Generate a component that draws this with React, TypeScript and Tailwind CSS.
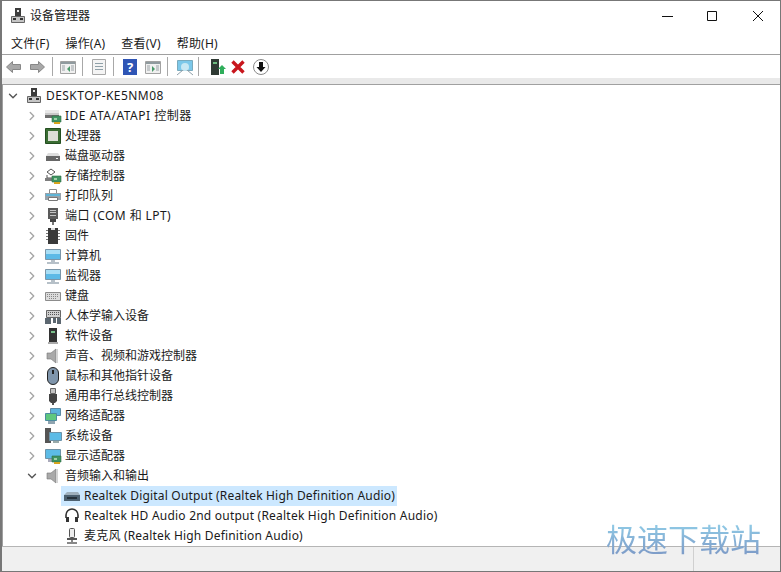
import { ChevronDown, ChevronRight } from 'lucide-react'
import type { ReactNode } from 'react'

const font = '[font-family:"Noto_Sans","Noto_Sans_CJK_SC",sans-serif]'

const Svg = ({ children, w = 18, h = 18 }: { children: ReactNode; w?: number; h?: number }) => (
	<svg width={w} height={h} viewBox={`0 0 ${w} ${h}`} className="shrink-0">
		{children}
	</svg>
)

const Computer = () => (
	<Svg>
		<path d="M6 1h6v8H6z" fill="#3c3c3c" />
		<path d="M8 3h2v2H8z" fill="#e8e8e8" />
		<path d="M2.500 9.500h13v6h-13z" fill="#c4c4c4" stroke="#666" />
		<path d="M4 11h3v2H4zM11 11h3v2h-3z" fill="#333" />
	</Svg>
)
const Board = () => (
	<>
		<path d="M8 9h9v6H8z" fill="#3f9463" stroke="#2b6b41" strokeWidth=".6" />
		<path d="M10 11h3v2h-3z" fill="#9fd0a8" />
		<path d="M10 15h6v2h-6z" fill="#d6a51f" />
	</>
)
const Ide = () => (
	<Svg>
		<path d="M1 5a2 2 0 0 1 2-2h10a2 2 0 0 1 2 2v6H1z" fill="#c9c9c9" />
		<path d="M1 3h14v3H1z" fill="#e8e8e8" />
		<path d="M1 8h14v3H1z" fill="#6e6e6e" />
		<Board />
	</Svg>
)
const Cpu = () => (
	<Svg>
		<path d="M1.500 1.500h15v15h-15z" fill="#3a6d33" stroke="#234f20" />
		<path d="M4 4h10v10H4z" fill="#dcdfd6" />
	</Svg>
)
const Disk = () => (
	<Svg>
		<path d="M2 9l2-3h10l2 3z" fill="#dedede" />
		<path d="M2 9h14v5H2z" fill="#676767" />
		<path d="M12 11h2v1h-2z" fill="#eee" />
	</Svg>
)
const Storage = () => (
	<Svg>
		<path d="M3 5l4-3 4 3-4 3z" fill="#fff" stroke="#555" />
		<path d="M3 8v3h5" fill="none" stroke="#555" />
		<path d="M1 11h7v3H1z" fill="#7d7d7d" />
		<Board />
	</Svg>
)
const Printer = () => (
	<Svg>
		<path d="M5.500 2.500h7v4h-7z" fill="#fff" stroke="#8a8a8a" />
		<path d="M1 6h16v7H1z" fill="#98a2aa" />
		<path d="M2 7h14v2H2z" fill="#5fb4d6" />
		<path d="M4.500 10.500h9v3h-9z" fill="#fff" stroke="#777" />
	</Svg>
)
const Port = () => (
	<Svg>
		<path d="M4 1h10v11H4z" fill="#5a5a5a" />
		<path d="M6 3h6v1H6zM6 5h6v1H6zM6 8h6v1H6z" fill="#c4c4c4" />
		<path d="M6 12h6v3H6z" fill="#444" />
		<path d="M8 15h2v3H8z" fill="#777" />
	</Svg>
)
const Chip = () => (
	<Svg>
		<path d="M4 1h10v16H4z" fill="#3a3a3a" />
		<path d="M2 3h2v1H2zM2 6h2v1H2zM2 9h2v1H2zM2 12h2v1H2zM14 3h2v1h-2zM14 6h2v1h-2zM14 9h2v1h-2zM14 12h2v1h-2z" fill="#777" />
		<path d="M7 1h4v2H7z" fill="#ddd" />
	</Svg>
)
const Monitor = () => (
	<Svg>
		<path d="M1.500 2.500h15v10h-15z" fill="#5cb9e6" stroke="#7a95a8" />
		<path d="M2 3h14v4H2z" fill="#a9def5" />
		<path d="M7 13h4v2H7zM3 15h12v2H3z" fill="#b6c0c8" />
	</Svg>
)
const Keyboard = () => (
	<Svg>
		<path d="M1.500 5.500h15v8h-15z" fill="#dcdcdc" stroke="#8c8c8c" />
		<path d="M3 7.500h12M3 9.500h12M5 11.500h8" stroke="#888" strokeDasharray="1 1" />
	</Svg>
)
const Hid = () => (
	<Svg>
		<path d="M2.500 3.500h14v7h-14z" fill="#d0d0d0" stroke="#666" />
		<path d="M4 5.500h11M4 7.500h11" stroke="#555" strokeDasharray="1 1" />
		<path d="M1 11h6v6H1zM9 11h3v5H9zM13 11h4v6h-4z" fill="#5c6770" />
	</Svg>
)
const SoftDevice = () => (
	<Svg>
		<path d="M5 1h8v14H5z" fill="#333" />
		<path d="M7 4h4v2H7z" fill="#79c08a" />
		<path d="M4 15h10v2H4z" fill="#aaa" />
	</Svg>
)
const Speaker = () => (
	<Svg>
		<path d="M3 6h4l5-4v14l-5-4H3z" fill="#a9a9a9" stroke="#777" strokeWidth=".6" />
		<path d="M12 2h2v14h-2z" fill="#d4d4d4" />
	</Svg>
)
const Mouse = () => (
	<Svg>
		<rect x="3.500" y="0.500" width="11" height="17" rx="5.500" fill="#7f95ab" stroke="#222" />
		<path d="M9 3v4" stroke="#222" strokeWidth="2" />
	</Svg>
)
const Usb = () => (
	<Svg>
		<path d="M6.500 1.500h5v5h-5z" fill="#c4c4c4" stroke="#666" />
		<path d="M5 7h8v7l-2 2H7l-2-2z" fill="#444" />
		<path d="M8 16h2v2H8z" fill="#555" />
	</Svg>
)
const Network = () => (
	<Svg>
		<path d="M6.500 1.500h10v7h-10z" fill="#5cb3dc" stroke="#5c8ba5" />
		<path d="M1.500 6.500h11v7h-11z" fill="#5fc77e" stroke="#4b8ba0" />
		<path d="M4 14h7v3H4z" fill="#8fa4b0" />
	</Svg>
)
const SystemDevice = () => (
	<Svg>
		<path d="M1 1h6v15H1z" fill="#555" />
		<path d="M5.500 5.500h12v8h-12z" fill="#5cbbe6" stroke="#6d93a8" />
		<path d="M9 14h6v2H9z" fill="#9aa" />
	</Svg>
)
const Display = () => (
	<Svg>
		<path d="M1.500 2.500h15v9h-15z" fill="#5cbbe6" stroke="#6d93a8" />
		<path d="M4 12h6v3H4z" fill="#aab" />
		<Board />
	</Svg>
)
const AudioCard = () => (
	<Svg>
		<path d="M1 8l3-3h11l2 3z" fill="#9fb0bd" />
		<path d="M1 8h16v6H1z" fill="#4d6171" />
		<path d="M4 10h10v2H4z" fill="#26323c" />
	</Svg>
)
const Headphones = () => (
	<Svg>
		<path d="M3 11V8a6 6 0 0 1 12 0v3" fill="none" stroke="#333" strokeWidth="1.600" />
		<path d="M3 10h3v5H3zM12 10h3v5h-3z" fill="#333" />
	</Svg>
)
const Mic = () => (
	<Svg>
		<rect x="6.500" y="1.500" width="5" height="9" rx="1" fill="#ededed" stroke="#555" />
		<path d="M4 11h10v2H4z" fill="#555" />
		<path d="M8 13h2v2H8zM4 15h10v2H4z" fill="#888" />
	</Svg>
)

const categories: [string, () => ReactNode, string?][] = [
	['IDE ATA/ATAPI 控制器', Ide, 'tracking-[0.5px]'],
	['处理器', Cpu],
	['磁盘驱动器', Disk],
	['存储控制器', Storage],
	['打印队列', Printer],
	['端口 (COM 和 LPT)', Port, 'tracking-[0.4px]'],
	['固件', Chip],
	['计算机', Monitor],
	['监视器', Monitor],
	['键盘', Keyboard],
	['人体学输入设备', Hid],
	['软件设备', SoftDevice],
	['声音、视频和游戏控制器', Speaker],
	['鼠标和其他指针设备', Mouse],
	['通用串行总线控制器', Usb],
	['网络适配器', Network],
	['系统设备', SystemDevice],
	['显示适配器', Display],
]

const audioChildren: [string, () => ReactNode, boolean, string][] = [
	['Realtek Digital Output (Realtek High Definition Audio)', AudioCard, true, 'tracking-[0.19px]'],
	['Realtek HD Audio 2nd output (Realtek High Definition Audio)', Headphones, false, 'tracking-[0.22px]'],
	['麦克风 (Realtek High Definition Audio)', Mic, false, 'tracking-[0.19px]'],
]

const Chevron = ({ open }: { open?: boolean }) => (
	<span className="flex w-[19px] shrink-0 items-center">
		{open ? (
			<ChevronDown size={14} strokeWidth={2.4} className="text-[#555]" />
		) : (
			<ChevronRight size={14} strokeWidth={2.4} className="text-[#a6a6a6]" />
		)}
	</span>
)

const Category = ({
	label,
	Icon,
	open,
	spacing = '',
}: {
	label: string
	Icon: () => ReactNode
	open?: boolean
	spacing?: string
}) => (
	<div className="flex h-5 items-center pl-[21px]">
		<Chevron open={open} />
		<Icon />
		<span className={`ml-[3px] whitespace-nowrap ${spacing}`}>{label}</span>
	</div>
)

const Divider = ({ className }: { className: string }) => <span className={`h-[19px] w-px bg-[#a8a8a8] ${className}`} />

const PanelIcon = ({ arrow }: { arrow: string }) => (
	<Svg>
		<path d="M1.500 3.500h15v12h-15z" fill="#f0f0f0" stroke="#a2a2a2" />
		<path d="M2 4h14v2H2z" fill="#8f9a9e" />
		<path d="M3 8h3M3 10h3M3 12h3M12 8h3M12 10h3M12 12h3" stroke="#9aa2a6" />
		<path d={arrow} fill="#4a9a6a" />
	</Svg>
)

const Toolbar = () => (
	<div className="flex h-[23px] shrink-0 items-center pl-[3px]">
		<Svg>
			<path d="M1.500 9l6-5.500v3h8v5h-8v3z" fill="#a8a8a8" stroke="#888" />
		</Svg>
		<span className="w-[5px]" />
		<Svg>
			<path d="M16.500 9l-6-5.500v3h-8v5h8v3z" fill="#a8a8a8" stroke="#888" />
		</Svg>
		<Divider className="ml-[6px] mr-[6px]" />
		<PanelIcon arrow="M11 8l-3 3 3 3z" />
		<Divider className="ml-[5px] mr-[7px]" />
		<Svg>
			<path d="M2.500 1.500h13v15h-13z" fill="#f4f4f4" stroke="#a8a8a8" />
			<path d="M5 5.500h8M5 8.500h8M5 11.500h8" stroke="#8fa0a8" />
		</Svg>
		<Divider className="ml-[5px] mr-[7px]" />
		<Svg>
			<path d="M2 1h14v16H2z" fill="#2f55b5" />
			<text x="9" y="14" textAnchor="middle" fontSize="13" fontWeight="700" fill="#fff">
				?
			</text>
		</Svg>
		<span className="w-[5px]" />
		<PanelIcon arrow="M8 8l3 3-3 3z" />
		<Divider className="ml-[5px] mr-[8px]" />
		<Svg>
			<path d="M1.500 2.500h15v10h-15z" fill="#7cc8ea" stroke="#79aabd" />
			<circle cx="9" cy="9" r="4" fill="#c8e8f4" />
			<path d="M1 17l6-5M11 12l6 5" fill="none" stroke="#8fa0aa" />
		</Svg>
		<Divider className="ml-[4px] mr-[9px]" />
		<Svg>
			<path d="M3 1h8v16H3z" fill="#2f3a34" />
			<path d="M5 4h4v2H5z" fill="#6dbb80" />
			<path d="M10 11l4-4 4 4h-2v5h-4v-5z" fill="#2fae5b" />
		</Svg>
		<span className="w-[3px]" />
		<Svg>
			<path d="M3.500 3.500l11 11M14.500 3.500l-11 11" stroke="#c8161d" strokeWidth="3.400" />
		</Svg>
		<span className="w-[5px]" />
		<Svg>
			<circle cx="9" cy="9" r="7.500" fill="#fff" stroke="#8a8a8a" />
			<path d="M7 4h4v5h2.500L9 14 4.500 9H7z" fill="#111" />
		</Svg>
	</div>
)

export default function App() {
	return (
		<div
			className={`relative flex h-[572px] w-[781px] flex-col overflow-hidden border-t border-l-2 border-r border-b border-[#777] bg-white text-[12px] text-[#1a1a1a] ${font}`}
		>
			<div className="flex h-[29px] shrink-0 items-center pl-[7px]">
				<Computer />
				<span className="ml-[3px]">设备管理器</span>
				<svg width="150" height="16" viewBox="0 0 150 16" className="ml-auto mr-[1px]">
					<path d="M33 8.500h11" stroke="#111" />
					<path d="M78.500 3.500h9v9h-9z" fill="none" stroke="#111" />
					<path d="M124 3l10 10M134 3l-10 10" stroke="#111" />
				</svg>
			</div>
			<div className="flex h-[25px] shrink-0 items-center gap-[16px] border-b border-[#a0a0a0] pl-[9px] pt-[3px] tracking-[0.2px]">
				<span>文件(F)</span>
				<span>操作(A)</span>
				<span>查看(V)</span>
				<span>帮助(H)</span>
			</div>
			<Toolbar />
			<div className="h-[6px] shrink-0 bg-[#e9e9e9]" />
			<div className="min-h-0 flex-1 overflow-hidden border-t border-l border-[#a0a0a0] pl-[1px] pt-[1px]">
				<div className="flex h-5 items-center pl-[2px]">
					<Chevron open />
					<Computer />
					<span className="ml-[3px] tracking-[0.45px]">DESKTOP-KE5NM08</span>
				</div>
				{categories.map(([label, Icon, spacing]) => (
					<Category key={label} label={label} Icon={Icon} spacing={spacing} />
				))}
				<Category label="音频输入和输出" Icon={Speaker} open />
				{audioChildren.map(([label, Icon, selected, spacing]) => (
					<div key={label} className="flex h-5 items-center pl-[57px]">
						<div className={`flex h-5 items-center pr-[2px] ${selected ? 'bg-[#cce8ff]' : ''}`}>
							<span className="ml-[2px]">
								<Icon />
							</span>
							<span className={`ml-[3px] whitespace-nowrap ${spacing}`}>{label}</span>
						</div>
					</div>
				))}
			</div>
			<div className="flex h-[25px] shrink-0 border-t border-[#b5b5b5] bg-[#f0f0f0]">
				<div className="w-[691px]" />
				<div className="flex-1 border-l border-[#d0d0d0]" />
			</div>
			<span className="absolute top-[517px] left-[604px] whitespace-nowrap bg-gradient-to-b from-[#93d4ec] to-[#7b96c4] bg-clip-text text-[31px] leading-[40px] text-transparent [font-family:'Noto_Sans_CJK_SC',sans-serif]">
				极速下载站
			</span>
		</div>
	)
}
